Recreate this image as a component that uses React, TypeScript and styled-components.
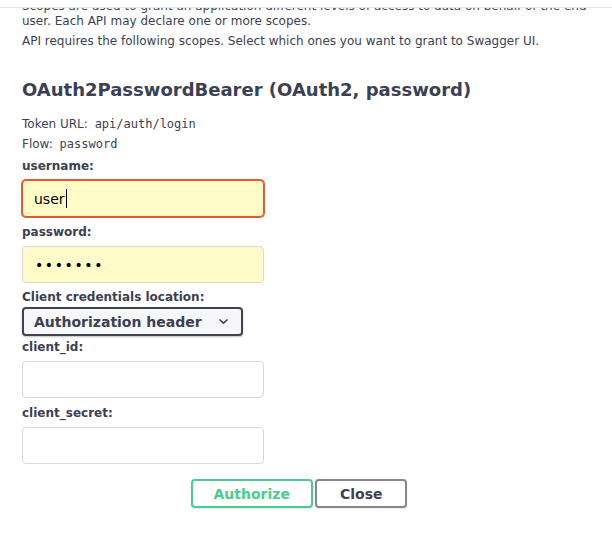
import React from "react";
import styled, { createGlobalStyle } from "styled-components";

const Global = createGlobalStyle`
  html, body { margin: 0; padding: 0; background: #fff; }
  body { font-family: "DejaVu Sans", "Noto Sans", sans-serif; color: #3b4151; }
  * { box-sizing: border-box; }
`;

const Modal = styled.div`
  width: 612px;
  height: 538px;
  display: flex;
  flex-direction: column;
  background: #fff;
  overflow: hidden;
`;

const HeaderEdge = styled.div`
  flex: none;
  height: 8px;
  border-bottom: 1px solid #e6e7e9;
`;

const ScrollBody = styled.div`
  flex: 1;
  overflow: hidden;
`;

const Content = styled.div`
  margin-top: -9px;
  padding: 0 18px 0 22px;
`;

const Desc = styled.p`
  margin: 0 0 5px;
  font-size: 12px;
  line-height: 15px;
`;

const Title = styled.h4`
  margin: 30px 0 13px;
  font-size: 18px;
  line-height: 22px;
  font-weight: bold;
`;

const Info = styled.p`
  margin: 0;
  font-size: 12px;
  line-height: 20px;
`;

const Code = styled.code`
  margin-left: 3px;
  font-family: "DejaVu Sans Mono", monospace;
  font-size: 12px;
`;

const Label = styled.label<{ $top?: number }>`
  display: block;
  margin-top: ${(p) => p.$top ?? 8}px;
  font-size: 12px;
  line-height: 15px;
  font-weight: bold;
`;

const Field = styled.div<{ $filled?: boolean; $focused?: boolean }>`
  width: 242px;
  height: 37px;
  margin-top: 6px;
  padding: 0 11px;
  display: flex;
  align-items: center;
  border: 1px solid ${(p) => (p.$focused ? "#e8592b" : "#d9d9d9")};
  border-radius: 4px;
  background: ${(p) => (p.$filled ? "#fefbc8" : "#fff")};
  box-shadow: ${(p) => (p.$focused ? "0 0 0 1px #e8592b" : "none")};
  font-size: 14px;
  color: #000;
`;

const Caret = styled.span`
  display: inline-block;
  width: 1px;
  height: 19px;
  margin-left: 1px;
  background: #000;
`;

const Dots = styled.span`
  font-size: 14px;
  letter-spacing: 1.6px;
  padding-left: 1px;
`;

const Select = styled.div`
  width: 221px;
  height: 29px;
  margin-top: 2px;
  padding: 0 12px 0 10px;
  display: flex;
  align-items: center;
  justify-content: space-between;
  border: 2px solid #41444e;
  border-radius: 4px;
  background: #f7f7f7;
  box-shadow: 0 1px 2px rgba(0, 0, 0, 0.25);
  font-size: 14px;
  font-weight: bold;
`;

const Actions = styled.div`
  margin-top: 15px;
  padding-right: 18px;
  display: flex;
  justify-content: center;
  gap: 2px;
`;

const Button = styled.button<{ $primary?: boolean }>`
  height: 29px;
  padding: ${(p) => (p.$primary ? "0 21px 0 21px" : "0 23px")};
  border: 2px solid ${(p) => (p.$primary ? "#49cc90" : "#888")};
  border-radius: 4px;
  background: #fff;
  color: ${(p) => (p.$primary ? "#49cc90" : "#3b4151")};
  font-family: "DejaVu Sans", sans-serif;
  font-size: 14px;
  font-weight: bold;
  box-shadow: 0 1px 2px rgba(0, 0, 0, 0.1);
`;

const Chevron = () => (
  <svg width="11" height="7" viewBox="0 0 11 7">
    <path d="M1.5 1.5 L5.5 5.2 L9.5 1.5" fill="none" stroke="#3b4151" strokeWidth="1.6" />
  </svg>
);

export default function App() {
  return (
    <>
      <Global />
      <Modal>
        <HeaderEdge />
        <ScrollBody>
          <Content>
            <Desc>
              Scopes are used to grant an application different levels of access to data on behalf of the end
              user. Each API may declare one or more scopes.
            </Desc>
            <Desc>API requires the following scopes. Select which ones you want to grant to Swagger UI.</Desc>
            <Title>OAuth2PasswordBearer (OAuth2, password)</Title>
            <Info>
              Token URL: <Code>api/auth/login</Code>
            </Info>
            <Info>
              Flow: <Code>password</Code>
            </Info>
            <Label $top={5}>username:</Label>
            <Field $filled $focused>
              user
              <Caret />
            </Field>
            <Label>password:</Label>
            <Field $filled>
              <Dots>•••••••</Dots>
            </Field>
            <Label $top={7}>Client credentials location:</Label>
            <Select>
              <span>Authorization header</span>
              <Chevron />
            </Select>
            <Label $top={4}>client_id:</Label>
            <Field />
            <Label>client_secret:</Label>
            <Field />
            <Actions>
              <Button $primary>Authorize</Button>
              <Button>Close</Button>
            </Actions>
          </Content>
        </ScrollBody>
      </Modal>
    </>
  );
}
